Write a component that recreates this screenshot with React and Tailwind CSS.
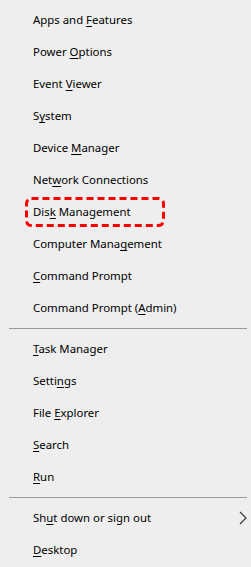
import React from 'react';

const group1 = [
    ['Apps and ', 'F', 'eatures'],
    ['Power ', 'O', 'ptions'],
    ['Event ', 'V', 'iewer'],
    ['S', 'y', 'stem'],
    ['Device ', 'M', 'anager'],
    ['Net', 'w', 'ork Connections'],
    ['Dis', 'k', ' Management'],
    ['Computer Mana', 'g', 'ement'],
    ['', 'C', 'ommand Prompt'],
    ['Command Prompt (', 'A', 'dmin)'],
];

const group2 = [
    ['', 'T', 'ask Manager'],
    ['Setti', 'n', 'gs'],
    ['File ', 'E', 'xplorer'],
    ['', 'S', 'earch'],
    ['', 'R', 'un'],
];

const MenuItem = ({ parts, highlight, arrow }) => (
    <div className="relative h-8 flex items-center pl-[33px] pr-2">
        <span>
            {parts[0]}
            <span className="underline underline-offset-[2px] decoration-1">{parts[1]}</span>
            {parts[2]}
        </span>
        {highlight && (
            // dashed callout round the item
            <svg className="absolute left-[24px] top-0" width="142" height="32" viewBox="0 0 142 32">
                <rect x="2.5" y="2.5" width="137" height="27" rx="5" fill="none"
                    stroke="#ff0000" strokeWidth="3" strokeDasharray="7 4" />
            </svg>
        )}
        {arrow && (
            <svg className="absolute left-[239px] top-[9px]" width="8" height="14" viewBox="0 0 8 14">
                <path d="M1 1 L7 7 L1 13" fill="none" stroke="#333" strokeWidth="1.1" />
            </svg>
        )}
    </div>
);

const Separator = () => (
    <div className="py-1 pl-[9px] pr-1">
        <div className="h-px bg-[#999999]" />
    </div>
);

const App = () => {
    return (
        <div className="w-[251px] h-[567px] bg-[#eeeeee] text-[11.4px] text-black pt-1 overflow-hidden"
            style={{ fontFamily: '"Segoe UI", "Noto Sans", sans-serif' }}>
            {group1.map((p, i) => (
                <MenuItem key={i} parts={p} highlight={i === 6} />
            ))}
            <Separator />
            {group2.map((p, i) => (
                <MenuItem key={i} parts={p} />
            ))}
            <Separator />
            <MenuItem parts={['Sh', 'u', 't down or sign out']} arrow />
            <MenuItem parts={['', 'D', 'esktop']} />
        </div>
    );
};

export default App;
